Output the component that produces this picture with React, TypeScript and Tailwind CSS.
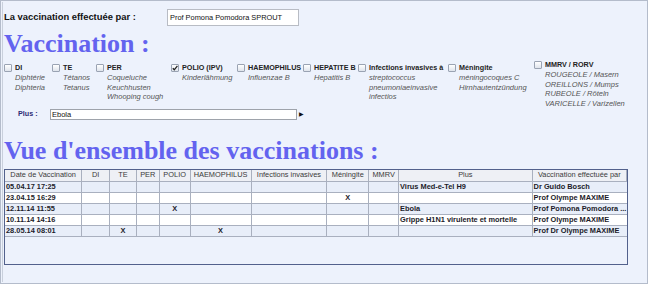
import React from 'react';

type Vaccine = {
  label: string;
  lines: string[];
  width: string;
  checked?: boolean;
  raised?: boolean;
};

const vaccines: Vaccine[] = [
  { label: 'DI', lines: ['Diphtérie', 'Diphteria'], width: 'w-[48px]' },
  { label: 'TE', lines: ['Tétanos', 'Tetanus'], width: 'w-[44px]' },
  { label: 'PER', lines: ['Coqueluche', 'Keuchhusten', 'Whooping cough'], width: 'w-[75px]' },
  { label: 'POLIO (IPV)', lines: ['Kinderlähmung'], width: 'w-[66px]', checked: true },
  { label: 'HAEMOPHILUS', lines: ['Influenzae B'], width: 'w-[66px]' },
  { label: 'HEPATITE B', lines: ['Hepatitis B'], width: 'w-[55px]' },
  { label: 'Infections invasives à', lines: ['streptococcus', 'pneumoniaeinvasive', 'infectios'], width: 'w-[90px]' },
  { label: 'Méningite', lines: ['méningocoques C', 'Hirnhautentzündung'], width: 'w-[86px]' },
  {
    label: 'MMRV / RORV',
    lines: ['ROUGEOLE / Masern', 'OREILLONS / Mumps', 'RUBEOLE / Röteln', 'VARICELLE / Varizellen'],
    width: 'w-[100px]',
    raised: true,
  },
];

type Row = {
  date: string;
  marks: number[];
  plus: string;
  by: string;
};

const columns = [
  { title: 'Date de Vaccination', width: 'w-[77px]' },
  { title: 'DI', width: 'w-[28px]' },
  { title: 'TE', width: 'w-[27px]' },
  { title: 'PER', width: 'w-[23px]' },
  { title: 'POLIO', width: 'w-[31px]' },
  { title: 'HAEMOPHILUS', width: 'w-[61px]' },
  { title: 'Infections invasives', width: 'w-[76px]' },
  { title: 'Méningite', width: 'w-[42px]' },
  { title: 'MMRV', width: 'w-[30px]' },
  { title: 'Plus', width: 'w-[135px]' },
  { title: 'Vaccination effectuée par', width: 'w-[93px]' },
];

// marks: index of the vaccine column (1..8) that carries an X
const rows: Row[] = [
  { date: '05.04.17 17:25', marks: [], plus: 'Virus Med-e-Tel H9', by: 'Dr Guido Bosch' },
  { date: '23.04.15 16:29', marks: [7], plus: '', by: 'Prof Olympe MAXIME' },
  { date: '12.11.14 11:55', marks: [4], plus: 'Ebola', by: 'Prof Pomona Pomodora ...' },
  { date: '10.11.14 14:16', marks: [], plus: 'Grippe H1N1 virulente et mortelle', by: 'Prof Olympe MAXIME' },
  { date: '28.05.14 08:01', marks: [2, 5], plus: '', by: 'Prof Dr Olympe MAXIME' },
];

const Checkbox: React.FC<{ checked?: boolean }> = ({ checked }) => (
  <span className="mt-[1px] flex h-[8px] w-[8px] shrink-0 items-center justify-center rounded-[1px] border border-[#9aa3b3] bg-gradient-to-b from-white to-[#dfe4ec]">
    {checked && (
      <svg width="6" height="6" viewBox="0 0 6 6">
        <path d="M0.8 3.2 L2.3 4.8 L5.4 0.9" fill="none" stroke="#222" strokeWidth="1.3" />
      </svg>
    )}
  </span>
);

export default function App() {
  return (
    <div className="h-[286px] w-[650px] bg-white font-['Liberation_Sans',Arial,sans-serif]">
      <div className="h-[284px] w-[648px] border border-[#b4bccb] bg-[#edf2fc] p-[1px]">
        <div className="h-full w-full border-l border-[#c9d0dc] pl-[1px] pt-[7px]">
          {/* who vaccinated */}
          <div className="flex h-[17px] items-center">
            <span className="w-[163px] text-[9.4px] font-bold text-[#111]">La vaccination effectuée par :</span>
            <div className="flex h-[17px] w-[132px] items-center border border-[#b8bcc4] bg-white pl-[2px] text-[7.4px] text-[#111]">
              Prof Pomona Pomodora SPROUT
            </div>
          </div>

          <h1 className="mt-[3px] font-['Liberation_Serif','Times_New_Roman',serif] text-[26px] font-bold leading-[30px] text-[#6363ef]">
            Vaccination :
          </h1>

          {/* vaccine checkboxes */}
          <div className="mt-[4px] flex h-[46px] items-start">
            {vaccines.map((v) => (
              <div key={v.label} className={`flex shrink-0 gap-[3px] ${v.width} ${v.raised ? '-mt-[3px]' : ''}`}>
                <Checkbox checked={v.checked} />
                <div className="whitespace-nowrap">
                  <div className="text-[7.2px] font-bold leading-[10px] text-[#222]">{v.label}</div>
                  {v.lines.map((l) => (
                    <div key={l} className="text-[7.5px] italic leading-[9.6px] text-[#555]">
                      {l}
                    </div>
                  ))}
                </div>
              </div>
            ))}
          </div>

          <div className="flex h-[11px] items-center">
            <span className="ml-[14px] w-[32px] text-[7.2px] font-bold text-[#2c2c74]">Plus :</span>
            <div className="flex h-[11px] w-[247px] items-center border border-[#9ea3ab] bg-white pl-[1px] text-[7.5px] text-[#111]">
              Ebola
            </div>
            <span className="ml-[2px] text-[6px] text-[#111]">▶</span>
          </div>

          <h2 className="mt-[16px] font-['Liberation_Serif','Times_New_Roman',serif] text-[26px] font-bold leading-[30px] text-[#6363ef]">
            Vue d'ensemble des vaccinations :
          </h2>

          {/* overview table */}
          <div className="mt-[3px] h-[96px] w-[624px] border border-[#52618c] bg-[#edf2fc]">
            <table className="table-fixed border-collapse text-[7.4px] leading-[10px]">
              <thead>
                <tr className="bg-[#eef0f5]">
                  {columns.map((c) => (
                    <th
                      key={c.title}
                      className={`${c.width} h-[11px] overflow-hidden whitespace-nowrap border-b border-r border-[#a9b0bf] p-0 text-center font-normal text-[#3a3a3a]`}
                    >
                      {c.title}
                    </th>
                  ))}
                </tr>
              </thead>
              <tbody>
                {rows.map((r, i) => (
                  <tr key={r.date} className={i % 2 === 0 ? 'bg-[#e8eef9]' : 'bg-white'}>
                    <td className="h-[11px] border-b border-r border-[#a9b0bf] p-0 pl-[1px] font-bold text-[#1c1c2a]">{r.date}</td>
                    {[1, 2, 3, 4, 5, 6, 7, 8].map((k) => (
                      <td key={k} className="border-b border-r border-[#a9b0bf] p-0 text-center font-bold text-[#1c1c2a]">
                        {r.marks.includes(k) ? 'X' : ''}
                      </td>
                    ))}
                    <td className="border-b border-r border-[#a9b0bf] p-0 pl-[1px] font-bold text-[#1c1c2a]">{r.plus}</td>
                    <td className="whitespace-nowrap border-b border-[#a9b0bf] p-0 pl-[1px] font-bold text-[#1c1c2a]">
                      {r.by}
                    </td>
                  </tr>
                ))}
              </tbody>
            </table>
          </div>
        </div>
      </div>
    </div>
  );
}
